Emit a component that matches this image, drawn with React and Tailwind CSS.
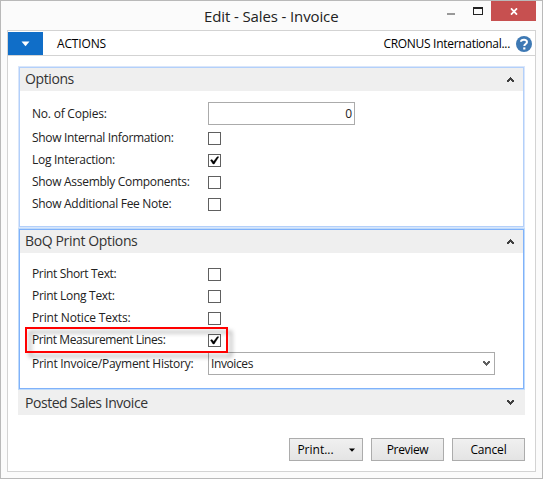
import React from "react";

const label = "text-[12px] leading-[16px] whitespace-nowrap text-[#222]";

function Chevron({ down = false, className = "" }) {
  return (
    <svg width="7" height="5" viewBox="0 0 7 5" className={`shrink-0 ${className}`} shapeRendering="crispEdges">
      <path
        d={down ? "M0 0h2v1h1v1h1v-1h1v-1h2v2h-1v1h-1v1h-1v1h-1v-1h-1v-1h-1v-1h-1z" : "M3 0h1v1h1v1h1v1h1v2h-2v-1h-1v-1h-1v1h-1v1h-2v-2h1v-1h1v-1h1z"}
        fill="currentColor"
      />
    </svg>
  );
}

function Checkbox({ checked = false }) {
  return (
    <div className="flex h-[13px] w-[13px] items-center justify-center border border-[#606060] bg-white">
      {checked && (
        <svg width="9" height="9" viewBox="0 0 9 9">
          <path d="M0.5 4.2L2 3.6L3.6 5.5L7.2 0.8H8.8L4.2 8H3Z" fill="#000" stroke="#000" strokeWidth=".4" />
        </svg>
      )}
    </div>
  );
}

function Header({ text, down = false, className = "", tracking = "" }) {
  return (
    <div className={`flex items-center justify-between bg-[#efefef] pl-[5px] ${className}`}>
      <span className={`text-[14px] leading-[20px] text-[#333] ${down ? "" : "mb-px"} ${tracking}`}>{text}</span>
      <Chevron down={down} className="text-[#404040]" />
    </div>
  );
}

function CheckRow({ text, checked, tracking = "" }) {
  return (
    <div className="flex h-[22px] items-center">
      <div className={`w-[176px] ${label} ${tracking}`}>{text}</div>
      <Checkbox checked={checked} />
    </div>
  );
}

const button =
  "flex h-[23px] items-center justify-center border border-[#acacac] bg-gradient-to-b from-[#f0f0f0] to-[#e4e4e4] text-[12px] text-black";

export default function App() {
  return (
    <div className="relative flex h-[479px] w-[543px] flex-col border border-[#b9b9b9] bg-[#fbfbfb] pr-[6px] pl-[6px] font-['Open_Sans','Noto_Sans',sans-serif]">
      <div className="flex h-[29px] shrink-0 items-start">
        <div className="w-[197px]" />
        <div className="w-[243px] pt-[4px] text-[15px] leading-[22px] tracking-[-0.12px] whitespace-nowrap text-[#222]">
          Edit - Sales - Invoice
        </div>
        <div className="mt-[12px] h-[2px] w-[8px] bg-[#999]" />
        <div className="mt-[6px] ml-[18px] h-[8px] w-[10px] border border-t-2 border-[#222]" />
        <div className="ml-[8px] flex h-[20px] w-[45px] items-center justify-center bg-[#c75050]">
          <svg width="8" height="7" viewBox="0 0 8 7">
            <path d="M1 .3L7 6.7M7 .3L1 6.7" stroke="#fff" strokeWidth="1.7" />
          </svg>
        </div>
      </div>

      <div className="flex h-[442px] w-[529px] shrink-0 flex-col border border-[#d3d3d3] bg-white">
        <div className="flex h-[25px] shrink-0 items-center border-b border-[#d3d3d3] pt-px">
          <div className="flex h-[23px] w-[35px] items-center justify-center bg-[#106ec8]">
            <svg width="9" height="6" viewBox="0 0 9 6">
              <path d="M.5 .5H8.5L4.5 5.2Z" fill="#fff" />
            </svg>
          </div>
          <div className="mt-px ml-[14px] text-[12px] tracking-[-0.15px] text-black">ACTIONS</div>
          <div className="mt-px ml-auto text-[12px] tracking-[-0.3px] whitespace-nowrap text-black">CRONUS International...</div>
          <svg className="mr-[3px] ml-[6px]" width="16" height="16" viewBox="0 0 16 16">
            <circle cx="8" cy="8" r="8" fill="#3e79b4" />
            <path d="M5 5.8C5 3.5 11 2.8 11 6C11 8 8.3 8 8.3 10" fill="none" stroke="#fff" strokeWidth="2" />
            <path d="M7.2 11.4h2.2v2.1H7.2z" fill="#fff" />
          </svg>
        </div>

        <div className="ml-[10px] flex w-[507px] flex-col pt-[10px]">
          <section className="h-[162px] border border-[#d9e6fb]">
            <div className="h-[160px] border border-[#b3d0fa]">
              <Header text="Options" className="h-[23px] pr-[9px]" tracking="tracking-[-0.4px]" />
              <div className="flex flex-col pt-[11px] pl-[12px]">
                <div className="mb-[2px] flex h-[23px] items-center">
                  <div className={`w-[176px] tracking-[-0.22px] ${label}`}>No. of Copies:</div>
                  <div className="flex h-[23px] w-[147px] items-center justify-end border border-[#ababab] pr-[2px] text-[12px] text-[#222]">0</div>
                </div>
                <CheckRow text="Show Internal Information:" tracking="tracking-[-0.33px]" />
                <CheckRow text="Log Interaction:" checked tracking="tracking-[-0.27px]" />
                <CheckRow text="Show Assembly Components:" tracking="tracking-[-0.3px]" />
                <CheckRow text="Show Additional Fee Note:" tracking="tracking-[-0.3px]" />
              </div>
            </div>
          </section>
          <section className="h-[162px] border border-[#bfdbfb]">
            <div className="h-[160px] border border-[#80b2fa]">
              <Header text="BoQ Print Options" className="h-[23px] pr-[9px]" tracking="tracking-[-0.36px]" />
              <div className="flex flex-col pt-[10px] pl-[12px]">
                <CheckRow text="Print Short Text:" tracking="tracking-[-0.36px]" />
                <CheckRow text="Print Long Text:" tracking="tracking-[-0.3px]" />
                <CheckRow text="Print Notice Texts:" tracking="tracking-[-0.18px]" />
                <CheckRow text="Print Measurement Lines:" checked tracking="tracking-[-0.43px]" />
                <div className="mt-px flex h-[23px] items-center">
                  <div className={`w-[176px] tracking-[-0.27px] ${label}`}>Print Invoice/Payment History:</div>
                  <div className="flex h-[23px] w-[287px] items-center justify-between border border-[#ababab] pr-[4px] pl-[2px]">
                    <span className={`tracking-[-0.4px] ${label}`}>Invoices</span>
                    <Chevron down className="text-[#606060]" />
                  </div>
                </div>
              </div>
            </div>
          </section>
          <Header text="Posted Sales Invoice" down className="h-[25px] pr-[11px] pl-[7px]" tracking="tracking-[-0.46px]" />
          <div className="mt-[23px] flex justify-end">
            <div className={`${button} w-[74px]`}>
              <span className="mr-[15px]">Print...</span>
              <svg width="6" height="4" viewBox="0 0 6 4">
                <path d="M0 .5H6L3 3.8Z" fill="#000" />
              </svg>
            </div>
            <div className={`${button} ml-[8px] w-[73px] tracking-[-0.35px]`}>Preview</div>
            <div className={`${button} ml-[8px] w-[73px] tracking-[-0.15px]`}>Cancel</div>
          </div>
        </div>
      </div>

      <div className="absolute top-[326px] left-[24px] h-[26px] w-[203px] border-2 border-[#ff0000] drop-shadow-[4px_4px_2px_rgba(0,0,0,0.35)]" />
    </div>
  );
}
